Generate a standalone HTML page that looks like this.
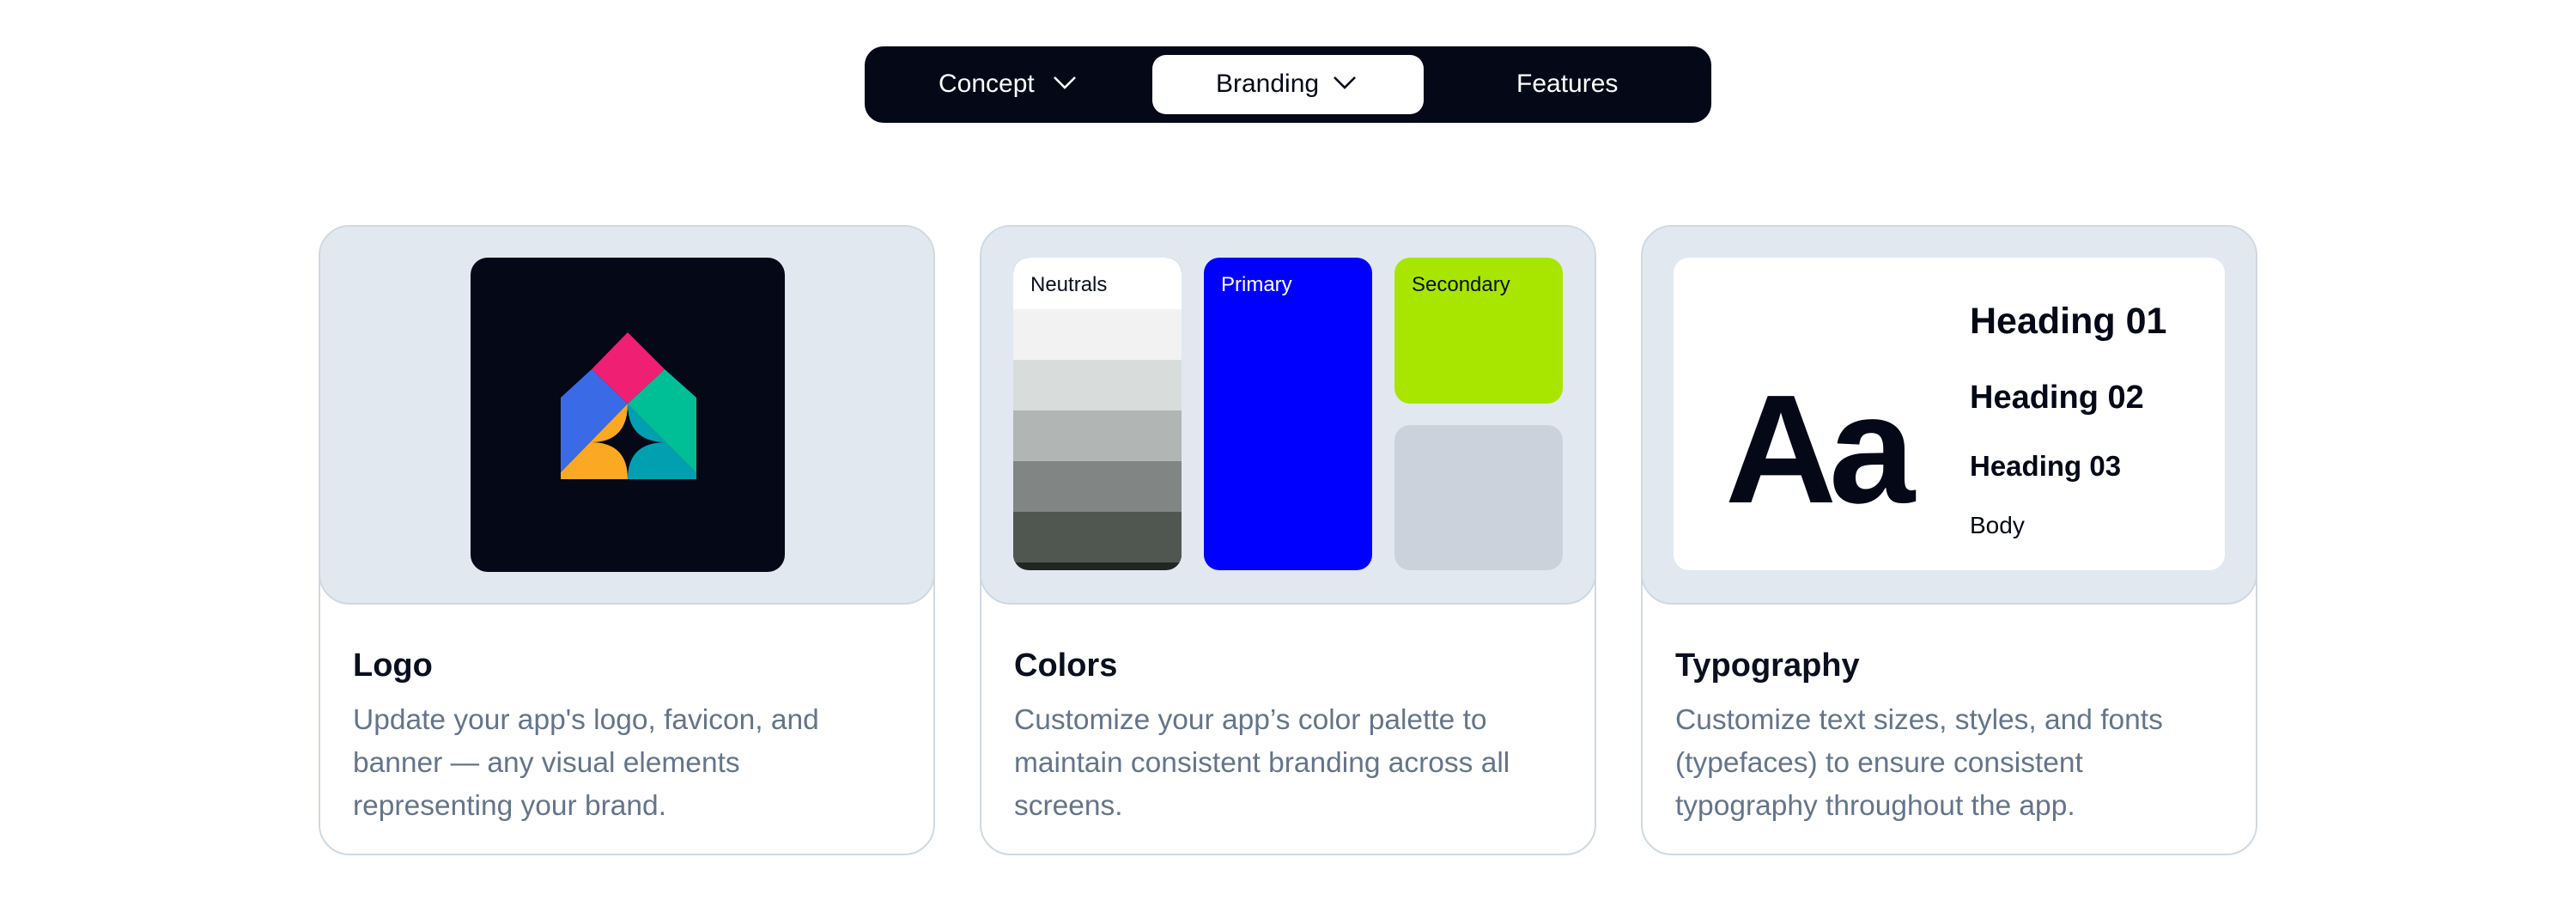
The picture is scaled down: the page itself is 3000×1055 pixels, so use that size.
<!DOCTYPE html>
<html><head><meta charset="utf-8"><style>
*{margin:0;padding:0;box-sizing:border-box}
body{width:3000px;height:1055px;background:#fff;font-family:"Liberation Sans",sans-serif;position:relative;overflow:hidden}
.abs{position:absolute}
.nav{left:1007px;top:54px;width:986px;height:89px;background:#040817;border-radius:22px}
.pill{left:1342px;top:64px;width:316px;height:69px;background:#fff;border-radius:16px}
.nt{font-size:30px;color:#fff;top:80px;line-height:36px}
.card{width:718px;top:262px;height:734px;border:2px solid #cfd8e3;border-radius:36px;background:#fff;overflow:hidden}
.panel{position:absolute;left:-2px;top:-2px;width:718px;height:442px;background:#e2e8f0;border:2px solid #cfd8e3;border-radius:36px}
.title{position:absolute;left:38px;top:490px;font-size:38px;font-weight:bold;color:#0a0f1f}
.desc{position:absolute;left:38px;top:550px;font-size:33.5px;line-height:50px;color:#64748b;width:620px}
</style></head><body>
<div class="abs nav"></div>
<div class="abs pill"></div>
<div class="abs nt" style="left:1093px">Concept</div>
<svg class="abs" style="left:1226px;top:86px" width="28" height="20" viewBox="0 0 28 20"><path d="M2 4 L14 16 L26 4" fill="none" stroke="#fff" stroke-width="2.6"/></svg>
<div class="abs nt" style="left:1416px;color:#040817">Branding</div>
<svg class="abs" style="left:1552px;top:86px" width="28" height="20" viewBox="0 0 28 20"><path d="M2 4 L14 16 L26 4" fill="none" stroke="#040817" stroke-width="2.6"/></svg>
<div class="abs nt" style="left:1766px">Features</div>

<div class="abs card" style="left:371px">
 <div class="panel"></div>
 <svg class="abs" style="left:175px;top:36px" width="366" height="366" viewBox="550 300 366 366">
  <rect x="550" y="300" width="366" height="366" rx="20" fill="#040817"/>
  <polygon points="655,550 733,470 813,550 813,558 655,558" fill="#fba823"/>
  <polygon points="733,470 813,550 813,558 733,558" fill="#00a0b0"/>
  <polygon points="691,430 733,470 655,550 655,463" fill="#3b6ae6"/>
  <polygon points="776,430 813,463 813,550 733,470" fill="#00bf97"/>
  <polygon points="733,387 776,430 733,470 691,430" fill="#ef1f74"/>
  <path d="M733,470 Q733,515 690,515 Q733,515 733,558 Q733,515 778,515 Q733,515 733,470Z" fill="#040817"/>
 </svg>
 <div class="title">Logo</div>
 <div class="desc">Update your app's logo, favicon, and banner — any visual elements representing your brand.</div>
</div>

<div class="abs card" style="left:1141px">
 <div class="panel"></div>
 <div class="abs" style="left:37px;top:36px;width:196px;height:364px;border-radius:18px;overflow:hidden;background:#1f2723">
  <div style="height:60px;background:#fff;font-size:24px;color:#0a0f1f;padding:18px 0 0 20px">Neutrals</div>
  <div style="height:59px;background:#f2f2f2"></div>
  <div style="height:59px;background:#d8dcdb"></div>
  <div style="height:59px;background:#b1b5b3"></div>
  <div style="height:59px;background:#818583"></div>
  <div style="height:59px;background:#4f5750"></div>
 </div>
 <div class="abs" style="left:259px;top:36px;width:196px;height:364px;border-radius:18px;background:#0000ff;font-size:24px;color:#fff;padding:18px 0 0 20px">Primary</div>
 <div class="abs" style="left:481px;top:36px;width:196px;height:170px;border-radius:18px;background:#a8e600;font-size:24px;color:#0a0f1f;padding:18px 0 0 20px">Secondary</div>
 <div class="abs" style="left:481px;top:231px;width:196px;height:169px;border-radius:18px;background:#cbd2db"></div>
 <div class="title">Colors</div>
 <div class="desc">Customize your app’s color palette to maintain consistent branding across all screens.</div>
</div>

<div class="abs card" style="left:1911px">
 <div class="panel"></div>
 <div class="abs" style="left:36px;top:36px;width:642px;height:364px;border-radius:18px;background:#fff">
  <div class="abs" style="left:60px;top:134px;font-size:180px;line-height:180px;font-weight:bold;color:#040817;letter-spacing:-9px">Aa</div>
  <div class="abs" style="left:345px;top:50px;font-size:43px;font-weight:bold;color:#040817">Heading 01</div>
  <div class="abs" style="left:345px;top:142px;font-size:38px;font-weight:bold;color:#040817">Heading 02</div>
  <div class="abs" style="left:345px;top:224px;font-size:33px;font-weight:bold;color:#040817">Heading 03</div>
  <div class="abs" style="left:345px;top:296px;font-size:28px;color:#040817">Body</div>
 </div>
 <div class="title">Typography</div>
 <div class="desc">Customize text sizes, styles, and fonts (typefaces) to ensure consistent typography throughout the app.</div>
</div>
</body></html>
